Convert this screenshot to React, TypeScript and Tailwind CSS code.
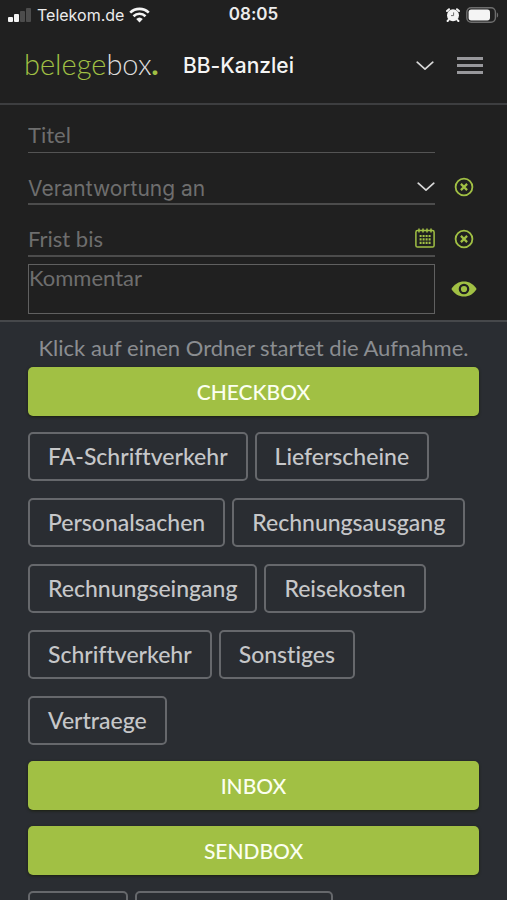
import { useState } from "react";

const checkboxFolders = [
  "FA-Schriftverkehr",
  "Lieferscheine",
  "Personalsachen",
  "Rechnungsausgang",
  "Rechnungseingang",
  "Reisekosten",
  "Schriftverkehr",
  "Sonstiges",
  "Vertraege",
];

function SignalIcon() {
  return (
    <svg width="24" height="14" viewBox="0 0 24 14" aria-hidden="true">
      <rect x="0" y="9" width="5" height="5" rx="1" fill="#f4f4f4" />
      <rect x="6" y="6" width="5" height="8" rx="1" fill="#f4f4f4" />
      <rect x="12" y="3" width="5" height="11" rx="1" fill="#4c4c4c" />
      <rect x="18" y="0" width="5" height="14" rx="1" fill="#4c4c4c" />
    </svg>
  );
}

function WifiIcon() {
  return (
    <svg width="21" height="16" viewBox="0 0 21 16" fill="none" stroke="#f4f4f4" strokeWidth="2.6" aria-hidden="true">
      <path d="M1.2 5.6a13.4 13.4 0 0 1 18.6 0" />
      <path d="M4.5 9.2a8.6 8.6 0 0 1 12 0" />
      <path d="M10.5 15.4 7.2 12.1a4.8 4.8 0 0 1 6.6 0Z" fill="#f4f4f4" stroke="none" />
    </svg>
  );
}

function AlarmIcon() {
  return (
    <svg width="14" height="14" viewBox="0 0 14 14" aria-hidden="true">
      <circle cx="7" cy="7.2" r="6" fill="#f4f4f4" />
      <path d="M1 3 3 1.200M13 3 11 1.200M2.600 11.800 1.600 13M11.400 11.800l1 1.200" stroke="#f4f4f4" strokeWidth="2" strokeLinecap="round" />
      <path d="M7.600 4.400v3.200H5" fill="none" stroke="#707070" strokeWidth="1" />
    </svg>
  );
}

function BatteryIcon() {
  return (
    <svg width="33" height="16" viewBox="0 0 33 16" aria-hidden="true">
      <rect x=".8" y=".8" width="28.6" height="14.4" rx="4.4" fill="none" stroke="#6e6e6e" strokeWidth="1.4" />
      <rect x="2.6" y="2.6" width="21.4" height="10.8" rx="2.6" fill="#f4f4f4" />
      <path d="M30.8 5.4c1.8.6 1.8 4.6 0 5.2Z" fill="#6e6e6e" />
    </svg>
  );
}

function ChevronIcon() {
  return (
    <svg width="18" height="10" viewBox="0 0 18 10" fill="none" stroke="#d8d8d8" strokeWidth="1.7" strokeLinecap="round" strokeLinejoin="round" aria-hidden="true">
      <path d="M1.2 1.2 9 8.2l7.8-7" />
    </svg>
  );
}

function ClearIcon() {
  return (
    <svg width="20" height="20" viewBox="0 0 20 20" fill="none" stroke="#a1c044" aria-hidden="true">
      <circle cx="10" cy="10" r="8.4" strokeWidth="1.8" />
      <path d="m6.9 6.9 6.2 6.2M13.1 6.9l-6.2 6.2" strokeWidth="2.2" />
    </svg>
  );
}

function CalendarIcon() {
  return (
    <svg width="20" height="20" viewBox="0 0 20 20" fill="none" stroke="#a1c044" aria-hidden="true">
      <rect x=".9" y="2.6" width="18.2" height="16.4" rx="1.6" strokeWidth="1.5" />
      <path d="M4 .4v4M8 .4v4M12 .4v4M16 .4v4" strokeWidth="1.5" />
      <path d="M4.600 8h11M4.600 11.400h11M4.600 14.800h11" strokeWidth="2.200" strokeDasharray="2 1" />
    </svg>
  );
}

function EyeIcon() {
  return (
    <svg width="26" height="16" viewBox="0 0 26 16" aria-hidden="true">
      <path d="M.4 8C3.4 3 7.8.4 13 .4S22.6 3 25.6 8C22.6 13 18.2 15.6 13 15.6S3.4 13 .4 8Z" fill="#a1c044" />
      <circle cx="13" cy="8" r="4.2" fill="#a1c044" stroke="#202020" strokeWidth="2.2" />
    </svg>
  );
}

function SectionButton({ label }: { label: string }) {
  return (
    <button className="h-[49px] w-full rounded-[5px] bg-[#a1c044] text-[21px] font-medium text-[#fbfff0] shadow-[0_1px_3px_#1b2010]">
      {label}
    </button>
  );
}

export default function App() {
  const [title, setTitle] = useState("");
  const [deadline, setDeadline] = useState("");
  const [comment, setComment] = useState("");
  const [owner, setOwner] = useState("");

  return (
    <div className="flex h-screen flex-col overflow-hidden bg-[#202020] font-[Lato,sans-serif] [font-variant-ligatures:none]">
      {/* Status bar */}
      <div className="grid h-7 shrink-0 grid-cols-[1fr_auto_1fr] items-center px-2 pt-[2px] font-[Inter,sans-serif] text-[#ececec]">
        <div className="flex items-center gap-[5px] text-base">
          <SignalIcon />
          <span>Telekom.de</span>
          <WifiIcon />
        </div>
        <span className="text-[17px] font-semibold">08:05</span>
        <div className="flex items-center justify-end gap-[6px]">
          <AlarmIcon />
          <BatteryIcon />
        </div>
      </div>

      {/* Header */}
      <header className="flex h-[77px] shrink-0 items-center border-b-2 border-[#3d3e40] px-6">
        <a href="#" className="w-[159px] pb-1 text-[29px] leading-8 font-light text-[#dcdcdc]">
          <span className="text-[#a1c044]">belege</span>box<span className="font-black text-[#a1c044]">.</span>
        </a>
        <div className="relative flex flex-1 items-center">
          <select
            aria-label="Kanzlei"
            className="w-full appearance-none bg-transparent font-[Inter,sans-serif] text-[21px] font-medium text-[#f4f4f4] outline-none"
          >
            <option>BB-Kanzlei</option>
          </select>
          <span className="pointer-events-none absolute right-0">
            <ChevronIcon />
          </span>
        </div>
        <button aria-label="Menü" className="ml-[23px] flex w-[26px] flex-col gap-1">
          <span className="h-[3px] w-full bg-[#98989c]" />
          <span className="h-[3px] w-full bg-[#98989c]" />
          <span className="h-[3px] w-full bg-[#98989c]" />
        </button>
      </header>

      {/* Form */}
      <form className="shrink-0 border-b-2 border-[#46484b] px-7 pb-[6px] pt-3 text-[22px]">
        <div className="grid grid-cols-[1fr_30px] items-center gap-x-[14px] gap-y-4">
          <input
            type="text"
            aria-label="Titel"
            placeholder="Titel"
            value={title}
            onChange={(e) => setTitle(e.target.value)}
            className="h-9 w-full border-b border-[#545454] bg-transparent text-[#dcdcdc] outline-none placeholder:text-[#6e6e6e]"
          />
          <span />

          <div className="relative flex items-center">
            <select
              aria-label="Verantwortung an"
              value={owner}
              onChange={(e) => setOwner(e.target.value)}
              className="h-9 w-full appearance-none border-b-2 border-[#4c4c4c] bg-transparent pt-1 font-[Inter,sans-serif] text-[21px] text-[#6e6e6e] outline-none"
            >
              <option value="">Verantwortung an</option>
            </select>
            <span className="pointer-events-none absolute right-0">
              <ChevronIcon />
            </span>
          </div>
          <button type="button" aria-label="Verantwortung löschen" onClick={() => setOwner("")} className="flex justify-center">
            <ClearIcon />
          </button>

          <div className="flex h-9 items-center border-b-2 border-[#4c4c4c]">
            <input
              type="text"
              aria-label="Frist bis"
              placeholder="Frist bis"
              value={deadline}
              onChange={(e) => setDeadline(e.target.value)}
              className="min-w-0 flex-1 bg-transparent text-[#dcdcdc] outline-none placeholder:text-[#6e6e6e]"
            />
            <button type="button" aria-label="Kalender">
              <CalendarIcon />
            </button>
          </div>
          <button type="button" aria-label="Frist löschen" onClick={() => setDeadline("")} className="flex justify-center">
            <ClearIcon />
          </button>
        </div>

        <div className="mt-[7px] grid grid-cols-[1fr_30px] items-center gap-x-[14px]">
          <textarea
            aria-label="Kommentar"
            placeholder="Kommentar"
            value={comment}
            onChange={(e) => setComment(e.target.value)}
            className="block h-[50px] w-full resize-none border border-[#606060] bg-transparent text-[#dcdcdc] leading-[26px] outline-none placeholder:text-[#6e6e6e]"
          />
          <button type="button" aria-label="Vorschau" className="flex justify-center">
            <EyeIcon />
          </button>
        </div>
      </form>

      {/* Folders */}
      <main className="min-h-0 flex-1 overflow-hidden bg-[#2a2d32] px-7 pt-3">
        <p className="mb-[5px] text-center text-[22px] leading-7 text-[#8b8d91]">
          Klick auf einen Ordner startet die Aufnahme.
        </p>
        <div className="flex flex-col gap-4">
          <SectionButton label="CHECKBOX" />
          <div className="flex flex-wrap gap-x-[7px] gap-y-[17px]">
            {checkboxFolders.map((folder) => (
              <button
                key={folder}
                className="h-[49px] rounded-[5px] border-2 border-[#66686c] px-[18px] text-[23px] font-medium text-[#c6c7c9]"
              >
                {folder}
              </button>
            ))}
          </div>
          <SectionButton label="INBOX" />
          <SectionButton label="SENDBOX" />
          <div className="flex gap-[7px]">
            <button aria-label="Ordner 1" className="h-[49px] w-[100px] rounded-[5px] border-2 border-[#66686c]" />
            <button aria-label="Ordner 2" className="h-[49px] w-[198px] rounded-[5px] border-2 border-[#66686c]" />
          </div>
        </div>
      </main>
    </div>
  );
}
